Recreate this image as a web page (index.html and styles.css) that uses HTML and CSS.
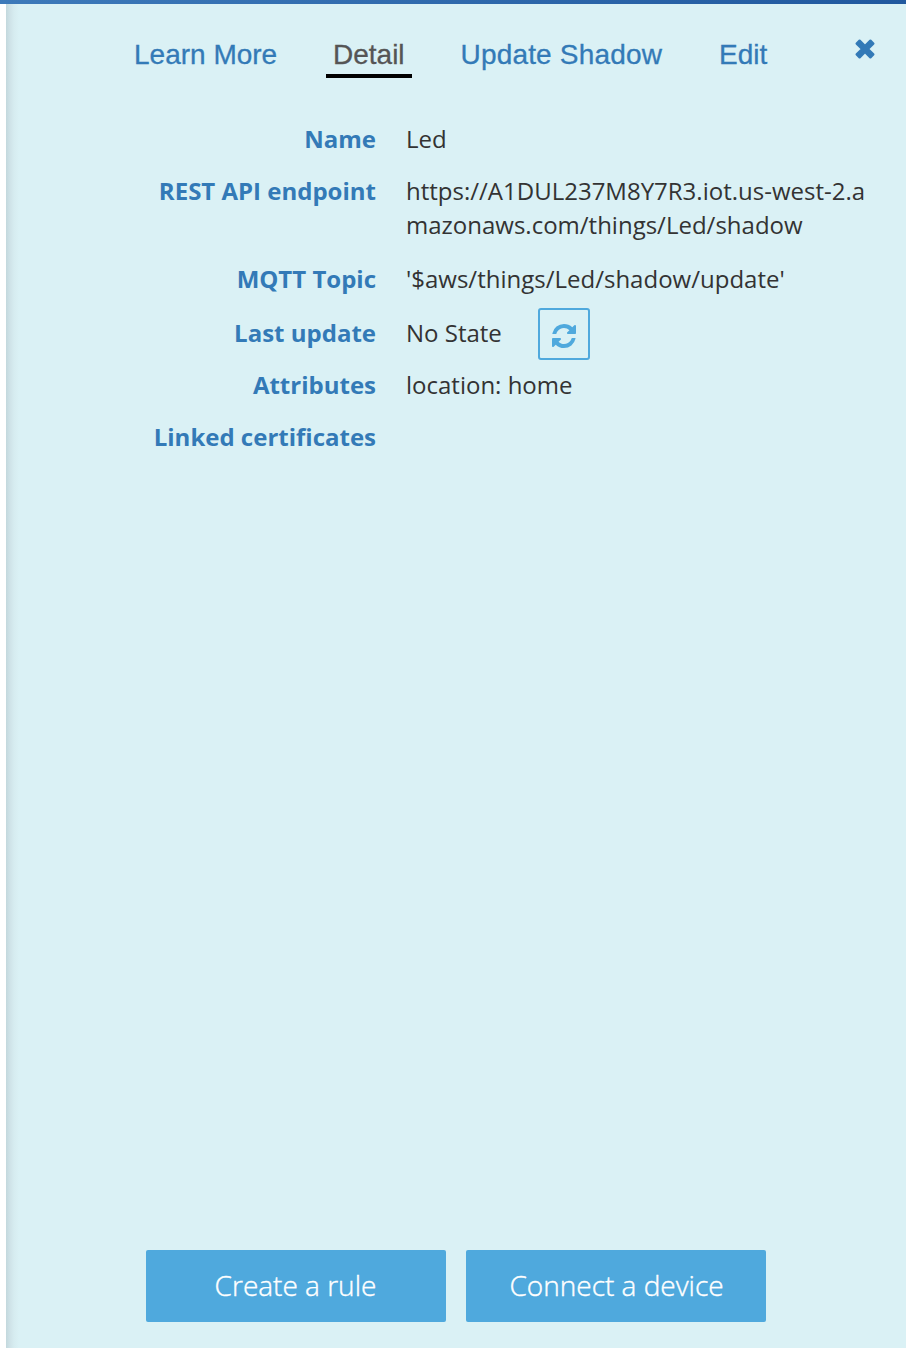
FILE: index.html
```html
<!DOCTYPE html>
<html lang="en">
<head>
<meta charset="utf-8">
<title>Led</title>
<link rel="stylesheet" href="styles.css">
</head>
<body>
<div class="topbar"></div>
<main class="panel">
  <header class="header">
    <nav class="tabs">
      <a class="tab">Learn More</a>
      <a class="tab tab-active">Detail</a>
      <a class="tab">Update Shadow</a>
      <a class="tab">Edit</a>
    </nav>
    <svg class="close" width="20" height="20" viewBox="0 0 20 20" aria-label="Close"><path d="M4.600 1.700L10 7.100L15.400 1.700L18.300 4.600L12.900 10L18.300 15.400L15.400 18.300L10 12.900L4.600 18.300L1.700 15.400L7.100 10L1.700 4.600Z" fill="currentColor" stroke="currentColor" stroke-width="2.4" stroke-linejoin="round"/></svg>
  </header>
  <dl class="details">
    <dt>Name</dt><dd>Led</dd>
    <dt>REST API endpoint</dt><dd>https://A1DUL237M8Y7R3.iot.us-west-2.a<br>mazonaws.com/things/Led/shadow</dd>
    <dt>MQTT Topic</dt><dd>'$aws/things/Led/shadow/update'</dd>
    <dt>Last update</dt>
    <dd class="state"><span class="state-text">No State</span>
      <button class="refresh" aria-label="Refresh"><svg width="24" height="24" viewBox="0 0 1536 1536"><path fill="currentColor" d="M1511 928q0 5-1 7-64 268-268 434.500T764 1536q-146 0-282.500-55T238 1324l-129 129q-19 19-45 19t-45-19-19-45V960q0-26 19-45t45-19h448q26 0 45 19t19 45-19 45l-137 137q71 66 161 102t187 36q134 0 250-65t186-179q11-17 53-117 8-23 30-23h192q13 0 22.500 9.500t9.500 22.500zm25-800v448q0 26-19 45t-45 19h-448q-26 0-45-19t-19-45 19-45l138-138Q969 256 768 256q-134 0-250 65T332 500q-11 17-53 117-8 23-30 23H50q-13 0-22.500-9.500T18 608v-7q65-268 270-434.500T768 0q146 0 284 55.500T1297 212l130-129q19-19 45-19t45 19 19 45z"/></svg></button>
    </dd>
    <dt>Attributes</dt><dd>location: home</dd>
    <dt>Linked certificates</dt><dd></dd>
  </dl>
  <footer class="actions">
    <button class="action">Create a rule</button>
    <button class="action">Connect a device</button>
  </footer>
</main>
</body>
</html>
```
FILE: styles.css
```css
* { box-sizing: border-box; }
body { margin: 0; height: 1348px; background: #fff; overflow: hidden; font-family: "Open Sans", sans-serif; }
.topbar { height: 4px; background: linear-gradient(165deg, #3d7aba, #20589e); }
.panel {
  height: 1344px;
  margin-left: 6px;
  display: flex;
  flex-direction: column;
  background: linear-gradient(to right, #c3d8dd 0, #cfe3e8 4px, #d6ecf0 8px, #daf1f5 13px, #daf1f5 100%);
}
.header { display: flex; justify-content: space-between; padding: 30px 31px 0 120px; color: #337ab7; }
.tabs { display: flex; gap: 42px; }
.tab {
  height: 44px;
  padding: 1px 7px 0;
  border-bottom: 4px solid transparent;
  font: 28px/40px "Liberation Sans", Arial, sans-serif;
  white-space: nowrap;
  -webkit-text-stroke: .3px currentColor;
}
.tab:first-child { width: 158px; padding-left: 8px; }
.tab-active { color: #555; border-color: #000; width: 86px; }
.tab:nth-child(3) { width: 216px; padding-left: 6.500px; letter-spacing: .18px; }
.close { margin-top: 5px; }
.details {
  display: grid;
  grid-template-columns: 370px 1fr;
  grid-template-rows: 52px 88px 54px 52px 52px 52px;
  column-gap: 30px;
  margin: 44px 0 0;
  font-size: 24px;
  line-height: 34px;
  color: #333;
}
.details dt { text-align: right; font-weight: 700; color: #337ab7; }
.details dd { margin: 0; white-space: nowrap; }
.state { display: flex; align-items: flex-start; }
.state-text { width: 132px; }
.refresh {
  display: grid;
  place-items: center;
  width: 52px;
  height: 52px;
  margin-top: -8px;
  padding: 4px 0 0;
  border: 2px solid #4fa9dd;
  border-radius: 3px;
  background: transparent;
  color: #4fa9dd;
}
.actions { display: flex; gap: 20px; margin: auto 0 26px 140px; }
.action {
  width: 300px;
  height: 72px;
  padding: 0 1px 2px 0;
  border: 0;
  border-radius: 2px;
  background: #4fa9dd;
  color: #fff;
  font: 300 28px/40px "Open Sans", sans-serif;
  -webkit-text-stroke: .4px #fff;
}
.action + .action { padding: 0 0 2px 1px; }
```
